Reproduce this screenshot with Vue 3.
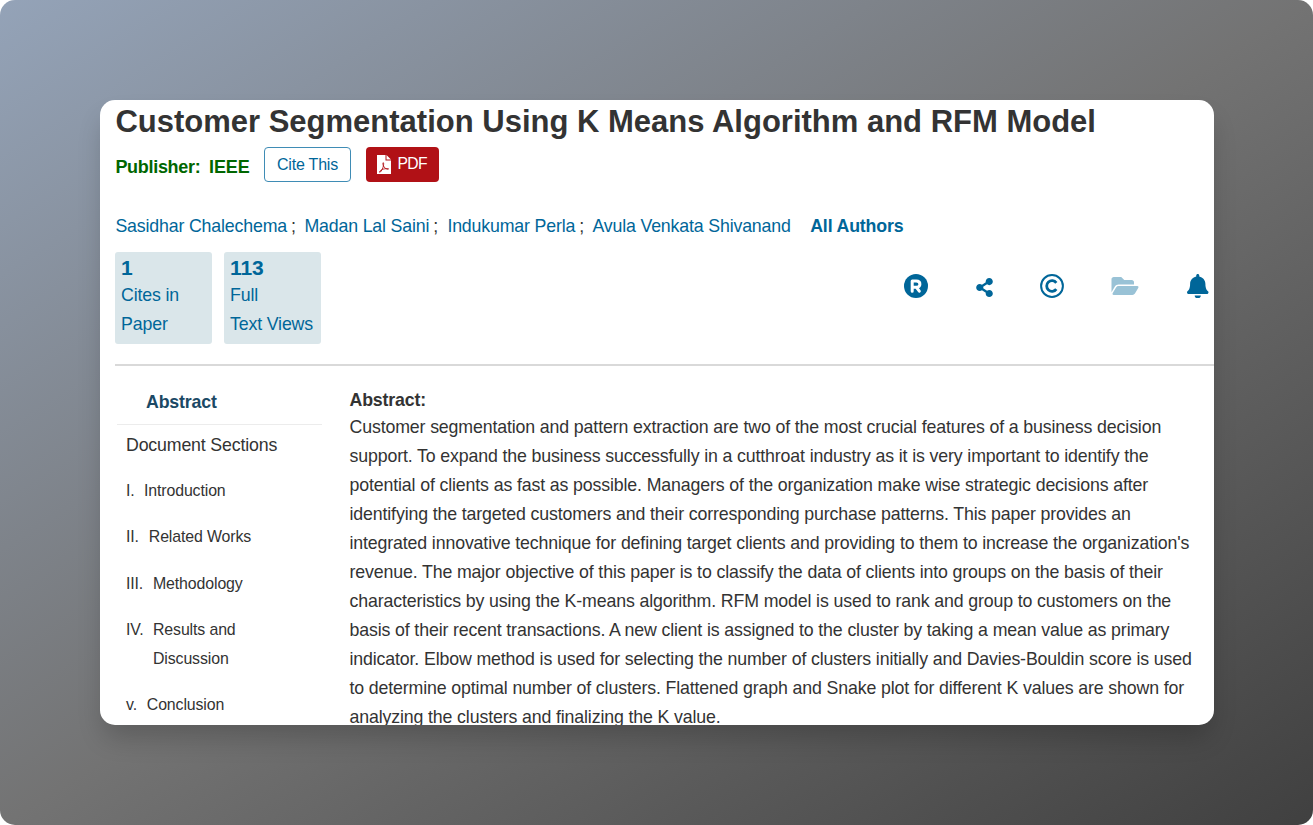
<script setup>
const authors = [
  { name: 'Sasidhar Chalechema', cls: 'a1' },
  { name: 'Madan Lal Saini', cls: 'a2' },
  { name: 'Indukumar Perla', cls: 'a3' },
]
const sections = [
  { n: 'I.', t: ['Introduction'], cls: 's1' },
  { n: 'II.', t: ['Related Works'], cls: 's2' },
  { n: 'III.', t: ['Methodology'], cls: 's3' },
  { n: 'IV.', t: ['Results and', 'Discussion'], cls: 's4' },
  { n: 'v.', t: ['Conclusion'], cls: 's5' },
]
const lines = [
  'Customer segmentation and pattern extraction are two of the most crucial features of a business decision',
  'support. To expand the business successfully in a cutthroat industry as it is very important to identify the',
  'potential of clients as fast as possible. Managers of the organization make wise strategic decisions after',
  'identifying the targeted customers and their corresponding purchase patterns. This paper provides an',
  "integrated innovative technique for defining target clients and providing to them to increase the organization's",
  'revenue. The major objective of this paper is to classify the data of clients into groups on the basis of their',
  'characteristics by using the K-means algorithm. RFM model is used to rank and group to customers on the',
  'basis of their recent transactions. A new client is assigned to the cluster by taking a mean value as primary',
  'indicator. Elbow method is used for selecting the number of clusters initially and Davies-Bouldin score is used',
  'to determine optimal number of clusters. Flattened graph and Snake plot for different K values are shown for',
  'analyzing the clusters and finalizing the K value.',
]
</script>

<template>
  <div class="stage">
    <main class="card">
      <h1>Customer Segmentation Using K Means Algorithm and RFM Model</h1>
      <div class="pub">
        <strong class="publisher">Publisher:</strong><strong class="ieee">IEEE</strong>
        <button class="cite">Cite This</button>
        <button class="pdf">
          <svg viewBox="0 0 14 19" width="14" height="19">
            <path fill="#fff" d="M0 0h8.500v5.500H14V19H0zM9.500 0L14 4.500H9.500z" />
            <path fill="none" stroke="#b11116" stroke-width=".9" d="M6.300 7.700c-.8 0-.3 3 .9 4.500s3.900 2.600 4.300 1.800-4.200-.4-6.200.5-3.300 2.500-2.600 2.800 2.300-2.200 3.200-4.600.900-5 .4-5z" />
          </svg>
          <span>PDF</span>
        </button>
      </div>
      <div class="authors">
        <span v-for="a in authors" :key="a.name" :class="['author', a.cls]"><a>{{ a.name }}</a><i>;</i></span>
        <span class="author"><a>Avula Venkata Shivanand</a></span>
        <strong>All Authors</strong>
      </div>
      <div class="metrics">
        <div class="box"><b>1</b><span>Cites in</span><span>Paper</span></div>
        <div class="box"><b>113</b><span>Full</span><span>Text Views</span></div>
        <div class="tools">
          <svg class="reg" viewBox="0 0 24 24"><circle cx="12" cy="12" r="12" fill="#069" /><path d="M8.200 17.200V7.100h4.100c4.800 0 4.800 6.200 0 6.200H8.200M12.500 13.300l2.800 3.900" fill="none" stroke="#fff" stroke-width="3" stroke-linecap="round" stroke-linejoin="round" /></svg>
          <svg class="share" viewBox="0 0 448 512"><path fill="#069" d="M352 320c-22.608 0-43.387 7.819-59.79 20.895l-102.486-64.054a96.551 96.551 0 0 0 0-41.683l102.486-64.054C308.613 184.181 329.392 192 352 192c53.019 0 96-42.981 96-96S405.019 0 352 0s-96 42.981-96 96c0 7.158.79 14.13 2.276 20.841L155.79 180.895C139.387 167.819 118.608 160 96 160c-53.019 0-96 42.981-96 96s42.981 96 96 96c22.608 0 43.387-7.819 59.79-20.895l102.486 64.054A96.301 96.301 0 0 0 256 416c0 53.019 42.981 96 96 96s96-42.981 96-96-42.981-96-96-96z" /></svg>
          <svg class="copy" viewBox="0 0 24 24"><circle cx="12" cy="12" r="10.900" fill="none" stroke="#069" stroke-width="2" /><path d="M16.300 8.900a5.300 5.300 0 1 0 0 6.200" fill="none" stroke="#069" stroke-width="2.800" /></svg>
          <svg class="folder" viewBox="0 64 576 384"><path fill="#99c2d6" d="M572.694 292.093L500.27 416.248A63.997 63.997 0 0 1 444.989 448H45.025c-18.523 0-30.064-20.093-20.731-36.093l72.424-124.155A64 64 0 0 1 152 256h399.964c18.523 0 30.064 20.093 20.73 36.093zM152 224h328v-48c0-26.51-21.49-48-48-48H272l-64-64H48C21.49 64 0 85.49 0 112v278.046l69.077-118.418C86.214 242.25 117.989 224 152 224z" /></svg>
          <svg class="bell" viewBox="0 0 448 512"><path fill="#069" d="M224 512c35.32 0 63.97-28.65 63.97-64H160.03c0 35.35 28.65 64 63.97 64zm215.39-149.71c-19.32-20.76-55.47-51.99-55.47-154.29 0-77.7-54.48-139.9-127.94-155.16V32c0-17.67-14.32-32-31.98-32s-31.98 14.33-31.98 32v20.84C118.56 68.1 64.08 130.3 64.08 208c0 102.3-36.15 133.53-55.47 154.29-6 6.45-8.66 14.16-8.61 21.71.11 16.4 12.98 32 32.1 32h383.8c19.12 0 32-15.6 32.1-32 .05-7.55-2.61-15.27-8.61-21.71z" /></svg>
        </div>
      </div>
      <hr />
      <div class="body">
        <nav>
          <div class="tab">Abstract</div>
          <div class="docs">Document Sections</div>
          <div v-for="s in sections" :key="s.n" :class="['sec', s.cls]">
            <span class="num">{{ s.n }}</span>
            <span><span v-for="x in s.t" :key="x" class="ln">{{ x }}</span></span>
          </div>
        </nav>
        <article>
          <h2>Abstract:</h2>
          <p><span v-for="(l, i) in lines" :key="i">{{ l }}</span></p>
        </article>
      </div>
    </main>
  </div>
</template>

<style>
body { background: #fff; overflow: hidden; }
</style>

<style scoped>
* { box-sizing: border-box; }
.stage {
  width: 1313px; height: 825px; padding: 100px; border-radius: 15px;
  background: linear-gradient(to bottom right, #94a3b8, #737373 50%, #404040);
  font-family: "Liberation Sans", Arial, sans-serif; color: #333;
}
.card {
  width: 1113.500px; height: 625px; padding-left: 15.400px; border-radius: 15px;
  background: #fff; overflow: hidden; white-space: nowrap;
  box-shadow: 0 16px 27px -4px rgba(0, 0, 0, .2);
}
h1 { margin: 0; height: 47px; line-height: 43px; font-size: 31px; }
.pub { display: flex; height: 35px; font-size: 18px; color: #060; line-height: 40px; }
.publisher { width: 93.600px; letter-spacing: -.3px; }
.ieee { width: 55px; letter-spacing: -.1px; }
button { font: 16px "Liberation Sans", Arial, sans-serif; border-radius: 4px; padding: 0; height: 35px; letter-spacing: -.2px; }
.cite { width: 87px; border: 1px solid #3f8cb5; background: #fff; color: #069; }
.pdf { width: 73px; margin-left: 15px; border: 0; background: #b11116; color: #fff; display: flex; align-items: center; padding-left: 11px; gap: 6.500px; font-size: 15.700px; letter-spacing: -.7px; }
.pdf span { margin-top: -1px; }
.authors { display: flex; height: 70px; padding-top: 29px; line-height: 30px; font-size: 17.750px; letter-spacing: -.16px; color: #333; }
.author a { color: #069; }
.author i { font-style: normal; margin-left: 4px; }
.a1 { width: 189px; }
.a2 { width: 143px; }
.a3 { width: 145px; }
.authors strong { color: #069; margin-left: 19.500px; }
.metrics { display: flex; gap: 12px; height: 92px; color: #069; }
.box { width: 97px; height: 92px; padding: 2px 5.700px; border-radius: 3px; background: #dae6ea; font-size: 17.750px; letter-spacing: -.16px; }
.box b { display: block; height: 27px; line-height: 28px; font-size: 21px; }
.box span { display: block; height: 29px; line-height: 29px; }
.tools { display: flex; align-items: center; height: 68px; margin-left: 571.100px; }
.reg { width: 24px; height: 24px; }
.share { width: 17px; height: 19px; margin-left: 47.500px; margin-top: 2px; }
.copy { width: 24px; height: 24px; margin-left: 47.500px; }
.folder { width: 28px; height: 18px; margin-left: 47px; }
.bell { width: 21.500px; height: 24.500px; margin-left: 48px; }
hr { margin: 20px 0 0; border: 0; height: 2px; background: #d9d9d9; }
.body { display: flex; }
nav { flex: none; width: 234.100px; padding-left: 1.600px; }
.tab { width: 205px; height: 59px; padding: 16px 0 0 29px; line-height: 40px; border-bottom: 1px solid #ececec; font-size: 17.750px; letter-spacing: -.16px; font-weight: bold; color: #1b4965; }
.docs { padding-left: 9px; height: 40.800px; line-height: 41px; font-size: 17.750px; letter-spacing: -.16px; }
.sec { display: flex; padding: 10px 0 7.400px 9px; font-size: 15.900px; line-height: 29px; letter-spacing: -.12px; }
.ln { display: block; }
.s1 .num { width: 18px; }
.s2 .num { width: 22.800px; }
.s3 .num { width: 27px; }
.s4 .num { width: 27px; }
.s5 .num { width: 20.800px; }
h2 { margin: 20px 0 0; height: 27px; line-height: 29px; font-size: 17.750px; letter-spacing: -.16px; }
p { margin: 0; font-size: 17.750px; letter-spacing: -.136px; line-height: 29.050px; }
p span { display: block; }
</style>
